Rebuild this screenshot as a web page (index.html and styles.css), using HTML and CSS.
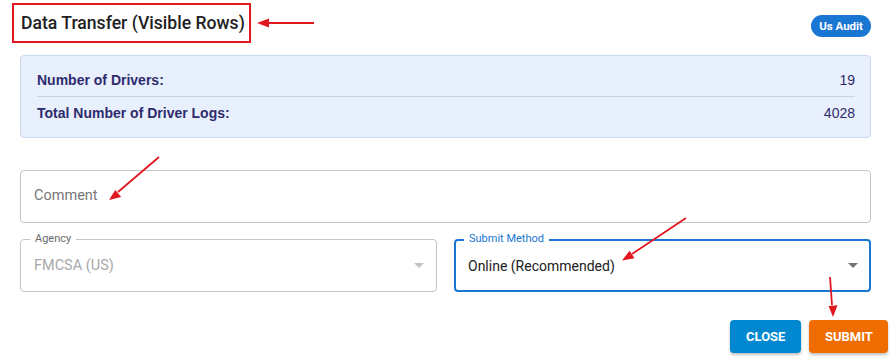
FILE: index.html
```html
<!DOCTYPE html>
<html lang="en">
<head>
    <meta charset="UTF-8">
    <meta name="viewport" content="width=device-width, initial-scale=1.0">
    <title>Data Transfer</title>
    <link rel="stylesheet" href="styles.css">
</head>
<body>

<div class="dialog">
    <div class="content">
        <div class="header">
            <h2 class="title">Data Transfer (Visible Rows)</h2>
            <span class="badge">Us Audit</span>
        </div>

        <div class="summary">
            <div class="summaryRow">
                <span class="summaryLabel">Number of Drivers:</span>
                <span class="summaryValue">19</span>
            </div>
            <div class="summaryRow">
                <span class="summaryLabel">Total Number of Driver Logs:</span>
                <span class="summaryValue">4028</span>
            </div>
        </div>

        <div class="field comment">
            <span class="placeholder">Comment</span>
        </div>

        <div class="selectRow">
            <div class="field select disabled">
                <span class="fieldLabel">Agency</span>
                <span class="selectValue">FMCSA (US)</span>
                <span class="caret"></span>
            </div>
            <div class="field select focused">
                <span class="fieldLabel">Submit Method</span>
                <span class="selectValue">Online (Recommended)</span>
                <span class="caret"></span>
            </div>
        </div>
    </div>

    <div class="actions">
        <button class="btn btnClose">Close</button>
        <button class="btn btnSubmit">Submit</button>
    </div>
</div>

<!-- annotation arrows drawn over the screenshot -->
<svg class="notes" viewBox="0 0 892 358" width="892" height="358">
    <g stroke="#e3171f" stroke-width="1.8" fill="#e3171f">
        <line x1="314" y1="23" x2="266" y2="23"/>
        <polygon points="257,23 269,18.5 269,27.5" stroke="none"/>
        <line x1="159" y1="157" x2="118" y2="192"/>
        <polygon points="109,200 121.2,196.9 115.3,190.1" stroke="none"/>
        <line x1="686" y1="218" x2="632" y2="254"/>
        <polygon points="622,260.5 634.6,258.3 629.6,250.8" stroke="none"/>
        <line x1="830" y1="277" x2="832" y2="305"/>
        <polygon points="833,317 837.5,305.3 828.5,306" stroke="none"/>
    </g>
</svg>

</body>
</html>
```

FILE: styles.css
```css
*{
    margin: 0px;
    padding: 0px;
    box-sizing: border-box;
}
body {
    font-family: Roboto, "Liberation Sans", Arial, sans-serif;
    background-color: #ffffff;
    width: 892px;
    height: 358px;
    overflow: hidden;
    position: relative;
}
.content {
    padding: 3px 21px 0px 20px;
}
.header {
    display: flex;
    justify-content: space-between;
    align-items: flex-start;
    margin-left: -8px;
}
.title {
    font-size: 17.6px;
    font-weight: 500;
    color: #212121;
    border: 2px solid #e3171f;
    padding: 7px 4px 7px 7px;
    line-height: 22px;
}
.badge {
    margin-top: 12px;
    background-color: #1976d2;
    color: white;
    font-size: 11.5px;
    font-weight: 700;
    height: 22px;
    line-height: 22px;
    padding: 0px 8px;
    border-radius: 11px;
}
.summary {
    margin-top: 12px;
    background-color: #e8f0fd;
    border: 1px solid #c9d8f0;
    border-radius: 4px;
    padding: 8px 15px 8px 16px;
    font-family: "Liberation Sans", Arial, sans-serif;
    font-size: 14px;
    color: #2e2b6d;
}
.summaryRow {
    display: flex;
    justify-content: space-between;
    align-items: center;
    height: 32px;
}
.summaryRow + .summaryRow {
    border-top: 1px solid #c9d3e3;
    height: 33px;
}
.summaryLabel {
    font-weight: 700;
}
.field {
    position: relative;
    border: 1px solid #c4c4c4;
    border-radius: 4px;
    display: flex;
    align-items: center;
    padding: 0px 13px;
    font-size: 14.5px;
}
.comment {
    margin-top: 32px;
    height: 53px;
}
.placeholder {
    color: #777777;
    padding-bottom: 3px;
}
.selectRow {
    display: flex;
    gap: 17px;
    margin-top: 16px;
}
.select {
    flex: 1;
    height: 53px;
}
.fieldLabel {
    position: absolute;
    top: -8px;
    left: 9px;
    padding: 0px 5px;
    background-color: white;
    font-size: 11px;
    line-height: 14px;
    color: #6b6b6b;
}
.selectValue {
    flex: 1;
}
.caret {
    width: 0px;
    height: 0px;
    border-left: 5px solid transparent;
    border-right: 5px solid transparent;
    border-top: 5px solid #757575;
    margin-right: -1px;
}
.disabled .selectValue {
    color: #a8a8a8;
}
.disabled .caret {
    border-top-color: #c4c4c4;
}
.focused {
    border: 2px solid #1976d2;
    padding: 0px 12px;
    font-size: 14px;
}
.focused .fieldLabel {
    color: #1976d2;
    top: -9px;
    left: 8px;
}
.focused .selectValue {
    color: #212121;
}
.actions {
    display: flex;
    justify-content: flex-end;
    gap: 8px;
    padding-right: 4px;
    margin-top: 28px;
}
.btn {
    font-family: Roboto, "Liberation Sans", Arial, sans-serif;
    font-size: 13px;
    font-weight: 700;
    text-transform: uppercase;
    color: white;
    border: none;
    border-radius: 4px;
    height: 33px;
    padding: 0px 16px;
    box-shadow: 0px 2px 3px rgba(0, 0, 0, 0.25);
}
.btnClose {
    background-color: #0288d1;
    width: 71px;
}
.btnSubmit {
    background-color: #ef6c00;
    width: 79px;
}
.notes {
    position: absolute;
    left: 0px;
    top: 0px;
    pointer-events: none;
}
```
